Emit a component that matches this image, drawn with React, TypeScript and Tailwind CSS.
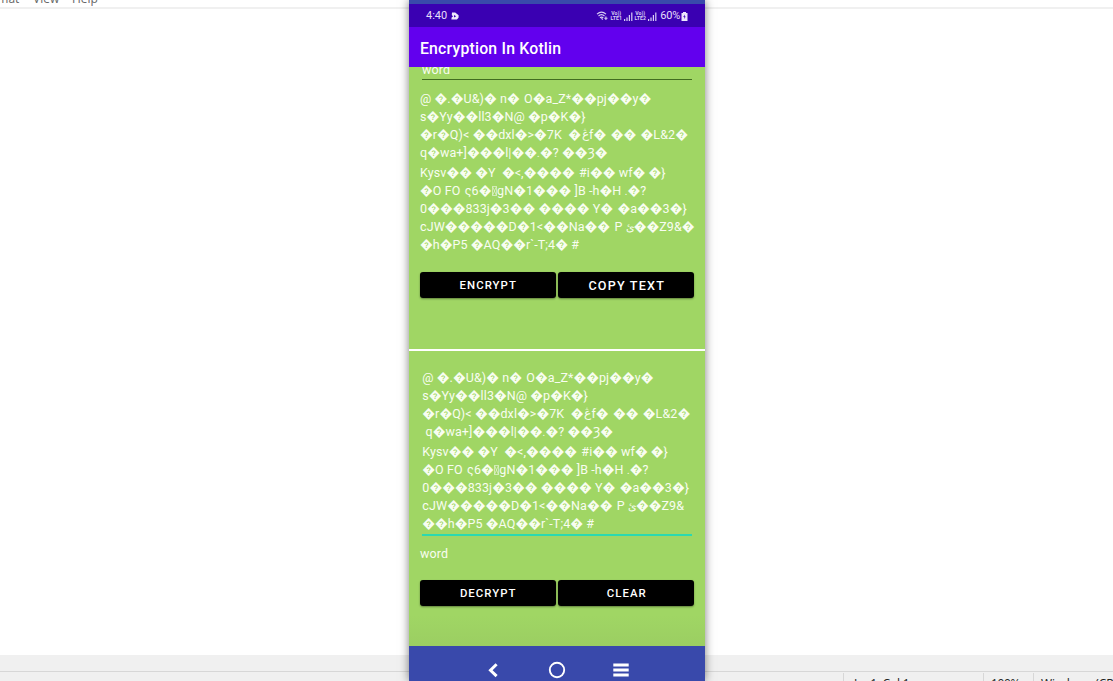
import React from "react";

const cipherLines = [
  "@ �.�U&)� n� \u200AO�a_Z*��pj��y�",
  "s�Yy��ll3�N@ �p�K�}",
  "�r�Q)< ��dxl�>�7K  �\u06A0f� \u200A�� \u200A�L&2�",
  "q�wa+]���l|��\u2024�? ��Ȝ�",
  "Kysv�� �Y  �<,���� \u200A#i�� wf� �}",
  "�O FO \u200Aς6�▯gN�1��� ]B -h�H \u2024�?",
  "0���833j�3�� ���� Y� \u200A�a��3�}",
  "cJW�����D�1<��Na�� \u200AP ئ��Z9&�",
  "�h�P5 �AQ��r`-T;4� #",
];

const inputLines = cipherLines.map((line, i) => {
  if (i === 3) return " " + line;
  if (i === 7) return line.slice(0, -1);
  if (i === 8) return "�" + line;
  return line;
});

function CipherLine({ text, tall }: { text: string; tall: boolean }) {
  return (
    <div dir="ltr" className={tall ? "h-[20px] whitespace-pre leading-[18px]" : "h-[18px] whitespace-pre leading-[18px]"}>
      {Array.from(text).map((ch, i) => {
        if (ch === "�")
          return (
            <span key={i} className="inline-block w-[12.75px] text-center">
              {ch}
            </span>
          );
        if (ch === "\u200A") return <span key={i} className="inline-block w-[1.2px]" />;
        if (ch === "\u2024")
          return (
            <span key={i} className="inline-block w-[3px] text-center text-[10px]">
              .
            </span>
          );
        if (ch === "▯")
          return (
            <svg key={i} className="mx-[0.3px] inline-block align-[-1px]" width="5" height="10" viewBox="0 0 5 10" fill="none" stroke="#fff" strokeWidth="0.7" opacity="0.75">
              <path d="M0.5 0.5h4v9h-4zM0.5 0.5l4 9M4.5 0.5l-4 9" />
            </svg>
          );
        if (ch === "\u06A0" || ch === "ئ")
          return (
            <span
              key={i}
              className={
                ch === "ئ"
                  ? "inline-block w-[8px] text-center text-[10.5px] leading-none"
                  : "relative -top-px inline-block w-[8px] text-center text-[12px] leading-none"
              }
            >
              {ch}
            </span>
          );
        return <React.Fragment key={i}>{ch}</React.Fragment>;
      })}
    </div>
  );
}

function CipherText({ lines }: { lines: string[] }) {
  return (
    <div className="text-[12.5px] tracking-[0.09px] text-[#f8fdf1]">
      {lines.map((line, i) => (
        <CipherLine key={i} text={line} tall={i === 3} />
      ))}
    </div>
  );
}

function Button({ label, large }: { label: string; large?: boolean }) {
  return (
    <div
      className={
        "flex h-[26px] w-[136px] items-center justify-center rounded-[3px] bg-black pt-[2px] pl-[1.5px] font-medium text-white shadow-[0_1px_2px_rgba(0,0,0,0.4)] " +
        (large ? "text-[12.6px] tracking-[1.2px]" : "text-[11.4px] tracking-[1.05px]")
      }
    >
      {label}
    </div>
  );
}

function Signal() {
  return (
    <svg width="9" height="9" viewBox="0 0 9 9" fill="#d9cff5">
      <path d="M0 7h1.2v2H0zM2.4 5.5h1.2V9H2.4zM4.8 3H6v6H4.8zM7.2 0.5h1.2V9H7.2z" />
    </svg>
  );
}

function Lte({ n }: { n: number }) {
  return (
    <div className="flex w-[11px] flex-col items-center text-[5.2px] font-bold leading-[4.8px] text-[#d9cff5]">
      <span>Vo))</span>
      <span>LTE{n}</span>
    </div>
  );
}

function StatusBar() {
  return (
    <div className="flex h-[23px] items-center bg-[#3a00b2] pl-[17px] pr-[17px] pt-px text-[#e6ddfa]">
      <span className="text-[11px]">4:40</span>
      <svg className="ml-[4px]" width="8" height="8" viewBox="0 0 8 8">
        <path d="M1 0.4H4.2L7.6 3.2v2.4L6 7.4H0.4L0.6 5.6 2 4.4 0.8 3z" fill="#eee8fc" />
        <path d="M3 3l2.2 1.2L3 5.4z" fill="#3a00b2" />
      </svg>
      <div className="flex-1" />
      <svg width="13" height="10" viewBox="0 0 12 10" fill="none" stroke="#d9cff5" strokeWidth="1.1">
        <path d="M0.5 3.2Q5 -1 9.5 3.2M2 5Q5 2.2 8 5M3.5 6.8Q5 5.4 6.8 6.8" />
        <path d="M5 7.2l1.2 1.4M9.4 5.4v3.6M7.8 7.2h3.2" />
      </svg>
      <div className="ml-[2px] flex items-center gap-[2px]">
        <Lte n={1} />
        <Signal />
        <Lte n={2} />
        <Signal />
      </div>
      <span className="ml-[3.5px] text-[11px] tracking-[-0.2px]">60%</span>
      <svg className="ml-[1px]" width="7" height="9" viewBox="0 0 7 9">
        <path d="M2 0h3v1h1.5v8h-6V1H2z" fill="#eee8fc" />
        <path d="M4 2.6L2.2 5h1.2L3 7 4.8 4.5H3.7z" fill="#3a00b2" />
      </svg>
    </div>
  );
}

function Phone() {
  return (
    <div className="flex h-[681px] w-[296px] flex-col bg-[#3949ab] pt-[4px] font-['Roboto','Noto_Sans',sans-serif] shadow-[0_0_9px_rgba(0,0,0,0.5)]">
      <StatusBar />
      <div className="flex h-[40px] items-center bg-[#6200ee] pl-[11px] pt-[3px] text-[15.8px] font-medium tracking-[0.2px] text-white">
        Encryption In Kotlin
      </div>
      <div className="h-[579px] overflow-hidden bg-[#a0d664]">
        <div className="ml-[13px] flex h-[13px] w-[270px] items-end overflow-hidden border-b border-[#416d20] text-[12.5px] leading-[18px] tracking-[0.1px] text-[#f8fdf1]">
          <span>word</span>
        </div>
        <div className="ml-[11px] h-[174px] pt-[10px]">
          <CipherText lines={cipherLines} />
        </div>
        <div className="ml-[10.5px] mt-[18px] flex gap-[2.5px]">
          <Button label="ENCRYPT" />
          <Button label="COPY TEXT" large />
        </div>
        <div className="mt-[51px] h-[2px] bg-white" />
        <div className="ml-[13.3px] mt-[18px] h-[167px] w-[270px] border-b-2 border-[#2bd9b0]">
          <CipherText lines={inputLines} />
        </div>
        <div className="ml-[11px] mt-[9px] h-[18px] text-[12.5px] leading-[18px] tracking-[0.1px] text-[#f8fdf1]">word</div>
        <div className="ml-[10.5px] mt-[17px] flex gap-[2.5px]">
          <Button label="DECRYPT" />
          <Button label="CLEAR" />
        </div>
        <div className="mt-[9px] h-[31px] bg-gradient-to-b from-[#a0d664] to-[#9bce62]" />
      </div>
      <div className="flex h-[35px] items-start pl-[78px] pt-[15px]">
        <svg width="12" height="18" viewBox="0 0 12 18" fill="none" stroke="#fff" strokeWidth="3">
          <path d="M9.6 3.2L3.5 9.3l6.1 5.9" />
        </svg>
        <svg className="ml-[49px]" width="18" height="18" viewBox="0 0 18 18" fill="none" stroke="#fff" strokeWidth="1.9">
          <circle cx="9" cy="9" r="7.2" />
        </svg>
        <svg className="ml-[47px]" width="16" height="18" viewBox="0 0 16 18" fill="#fff">
          <path d="M0.3 2.6h15.4v2.8H0.3zM0.3 7.6h15.4v2.8H0.3zM0.3 12.6h15.4v2.8H0.3z" />
        </svg>
      </div>
    </div>
  );
}

export default function App() {
  return (
    <div className="relative flex h-[681px] w-[1113px] flex-col overflow-hidden bg-white font-['Open_Sans','Noto_Sans',sans-serif]">
      <div className="flex h-[9px] shrink-0 items-end overflow-hidden border-b-2 border-[#f0f0f0] text-[12px] leading-[14px] text-[#666]">
        <div className="mb-[1px] flex h-[14px]">
          <span className="-ml-[21px] w-[54px]">Format</span>
          <span className="w-[39px]">View</span>
          <span>Help</span>
        </div>
      </div>
      <div className="flex-1" />
      <div className="h-[16px] shrink-0 bg-[#f0f0f0]" />
      <div className="flex h-[10px] shrink-0 justify-end overflow-hidden border-t border-[#d7d7d7] bg-[#f0f0f0] pt-[1px] text-[12px] leading-[21px] text-[#222]">
        <div className="h-[18px] w-[140px] border-l border-[#d7d7d7] pl-[10px] tracking-[-0.2px]">Ln 1, Col 1</div>
        <div className="h-[18px] w-[50px] border-l border-[#d7d7d7] pl-[7px] tracking-[-0.4px]">100%</div>
        <div className="h-[18px] w-[80px] overflow-hidden whitespace-nowrap border-l border-[#d7d7d7] pl-[7px]">Windows (CRLF)</div>
      </div>
      <div className="absolute left-[409px] top-0">
        <Phone />
      </div>
    </div>
  );
}
